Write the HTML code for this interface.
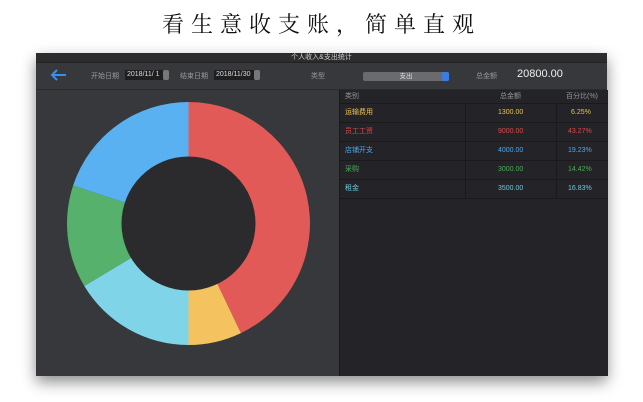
<!DOCTYPE html>
<html><head><meta charset="utf-8"><style>
body{margin:0;width:643px;height:402px;background:#fff;position:relative;overflow:hidden;font-family:"Liberation Sans","Noto Sans CJK SC",sans-serif}
.title{position:absolute;top:8px;left:0;width:643px;text-align:center;font-family:"Noto Serif CJK SC","Noto Sans CJK SC",serif;font-size:22px;letter-spacing:7px;color:#111}
.win{position:absolute;left:36px;top:53px;width:571px;height:323px;background:#37383b;box-shadow:0 6px 14px rgba(0,0,0,.45)}
.tb{position:absolute;left:0;top:0;width:571px;height:9px;background:#2c2c2e;color:#ccc;font-size:7px;text-align:center;line-height:9px;border-bottom:1px solid #222}
.s{position:absolute;font-size:7px;color:#999;white-space:nowrap}
.inp{position:absolute;background:#1e1e20;color:#ddd;font-size:7px;height:10px;line-height:10px;padding-left:2px;white-space:nowrap;overflow:hidden}
.right{position:absolute;left:303px;top:37px;width:268px;height:286px;background:#242428;border-left:1px solid #1a1a1a}
.row{position:absolute;left:0;width:268px;height:18px;border-bottom:1px solid #1a1a1c;font-size:7px;line-height:18px}
.row span{position:absolute;white-space:nowrap}
</style></head><body>
<div class="title">看生意收支账，简单直观</div>
<div class="win">
<div class="tb">个人收入&amp;支出统计</div>
<svg style="position:absolute;left:14px;top:16px" width="18" height="12"><path d="M2 6H16M7 1L2 6L7 11" stroke="#3a8ef0" stroke-width="2" fill="none"/></svg>
<div class="s" style="left:55px;top:18px">开始日期</div>
<div class="inp" style="left:89px;top:17px;width:36px">2018/11/ 1</div>
<div style="position:absolute;left:127px;top:17px;width:6px;height:10px;background:#777;border-radius:2px"></div>
<div class="s" style="left:144px;top:18px">结束日期</div>
<div class="inp" style="left:178px;top:17px;width:38px">2018/11/30</div>
<div style="position:absolute;left:218px;top:17px;width:6px;height:10px;background:#777;border-radius:2px"></div>
<div class="s" style="left:275px;top:18px">类型</div>
<div style="position:absolute;left:327px;top:19px;width:86px;height:9px;background:#6b6b6e;color:#ddd;font-size:6.5px;text-align:center;line-height:9px;border-radius:2px">支出</div>
<div style="position:absolute;left:406px;top:19px;width:7px;height:9px;background:#3a7de8;border-radius:2px"></div>
<div class="s" style="left:440px;top:18px">总金额</div>
<div style="position:absolute;left:481px;top:15px;color:#eee;font-size:11px">20800.00</div>
<div style="position:absolute;left:0;top:36px;width:571px;height:1px;background:#2a2a2c"></div>
<svg style="position:absolute;left:0;top:0" width="303" height="323">
<g transform="translate(152.5,170.5)">
<path d="M0,-121.5 A121.5,121.5 0 0 1 52.4,109.6 L0,0Z" fill="#e25a57"/>
<path d="M52.4,109.6 A121.5,121.5 0 0 1 0,121.5 L0,0Z" fill="#f5c260"/>
<path d="M0,121.5 A121.5,121.5 0 0 1 -104.2,62.5 L0,0Z" fill="#80d4e8"/>
<path d="M-104.2,62.5 A121.5,121.5 0 0 1 -115.4,-38.0 L0,0Z" fill="#55b16b"/>
<path d="M-115.4,-38.0 A121.5,121.5 0 0 1 0,-121.5 L0,0Z" fill="#5ab1f1"/>
<circle r="67" fill="#2b2b2d"/>
</g></svg>
<div class="right">
<div class="row" style="top:0;height:13px;line-height:13px;color:#999"><span style="left:5px">类别</span><span style="left:160px">总金额</span><span style="left:226px">百分比(%)</span></div>
<div class="row" style="top:14px;color:#e8c050"><span style="left:5px">运输费用</span><span style="left:158px">1300.00</span><span style="left:231px">6.25%</span></div>
<div class="row" style="top:33px;color:#d94a4a"><span style="left:5px">员工工资</span><span style="left:158px">9000.00</span><span style="left:228px">43.27%</span></div>
<div class="row" style="top:52px;color:#4aa8e8"><span style="left:5px">店铺开支</span><span style="left:158px">4000.00</span><span style="left:228px">19.23%</span></div>
<div class="row" style="top:71px;color:#4caa5a"><span style="left:5px">采购</span><span style="left:158px">3000.00</span><span style="left:228px">14.42%</span></div>
<div class="row" style="top:90px;color:#6cc8d8"><span style="left:5px">租金</span><span style="left:158px">3500.00</span><span style="left:228px">16.83%</span></div>
<div style="position:absolute;left:125px;top:14px;width:1px;height:94px;background:#1a1a1c"></div>
<div style="position:absolute;left:216px;top:14px;width:1px;height:94px;background:#1a1a1c"></div>
</div>
</div>
</body></html>
